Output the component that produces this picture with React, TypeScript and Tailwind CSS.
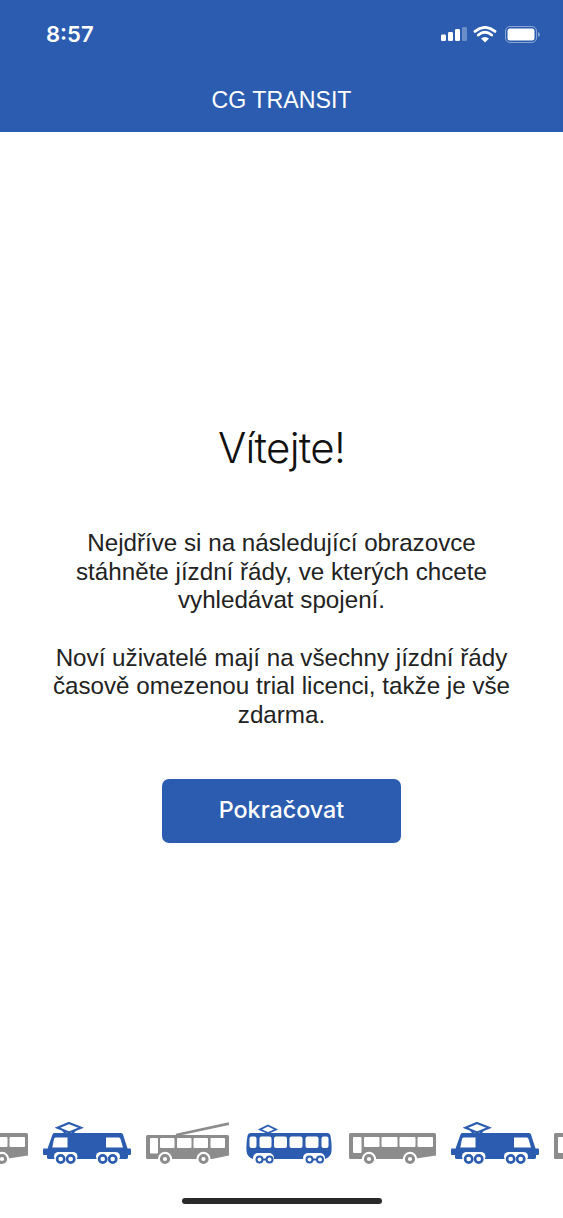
import React from 'react';

const BLUE = '#2b5cb0';
const GRAY = '#8c8c8c';

function Wheel({ x, color }: { x: number; color: string }) {
  return (
    <>
      <circle cx={x} cy={38} r={7.2} fill="#fff" />
      <circle cx={x} cy={38} r={3.6} fill="#fff" stroke={color} strokeWidth={3} />
    </>
  );
}

function Bus() {
  return (
    <svg width={87} height={44} viewBox="0 0 87 44" className="shrink-0">
      <path d="M1.5 12H85.5A1.5 1.5 0 0 1 87 13.5V34.5L64 38H1.5A1.5 1.5 0 0 1 0 36.5V13.5A1.5 1.5 0 0 1 1.5 12Z" fill={GRAY} />
      <rect x={4} y={16} width={8.5} height={16} rx={1} fill="#fff" />
      <rect x={15} y={16} width={15.5} height={10} rx={1} fill="#fff" />
      <rect x={32.5} y={16} width={16} height={10} rx={1} fill="#fff" />
      <rect x={50.5} y={16} width={16} height={10} rx={1} fill="#fff" />
      <rect x={68.5} y={16} width={15.5} height={10} rx={1} fill="#fff" />
      <Wheel x={20} color={GRAY} />
      <Wheel x={61} color={GRAY} />
    </svg>
  );
}

function Trolley() {
  return (
    <svg width={83} height={44} viewBox="0 0 83 44" className="shrink-0">
      <path d="M30 14L83 2.6" stroke={GRAY} strokeWidth={2.6} fill="none" />
      <path d="M1.5 14H81.5A1.5 1.5 0 0 1 83 15.5V34.5L66 38H1.5A1.5 1.5 0 0 1 0 36.5V15.5A1.5 1.5 0 0 1 1.5 14Z" fill={GRAY} />
      <rect x={4} y={17} width={8} height={15.5} rx={1} fill="#fff" />
      <rect x={14} y={17} width={14.5} height={10} rx={1} fill="#fff" />
      <rect x={31} y={17} width={14.5} height={10} rx={1} fill="#fff" />
      <rect x={47.5} y={17} width={14.5} height={10} rx={1} fill="#fff" />
      <rect x={64.5} y={17} width={14.5} height={10} rx={1} fill="#fff" />
      <Wheel x={19} color={GRAY} />
      <Wheel x={57.5} color={GRAY} />
    </svg>
  );
}

function Loco() {
  return (
    <svg width={88} height={44} viewBox="0 0 88 44" className="shrink-0">
      <path d="M26 2L38 6.7L26 11.4L14.5 6.7Z" fill="none" stroke={BLUE} strokeWidth={2.2} />
      <path d="M20 9.5L23 12.5M32 9.5L29 12.5" stroke={BLUE} strokeWidth={2} fill="none" />
      <path d="M11 12H78Q79.5 12 80 13.5L85 29V36.5Q85 38 83 38H6Q4 38 4 36.5V29L9.5 13.5Q10 12 11 12Z" fill={BLUE} />
      <rect x={0} y={27.5} width={5} height={6.5} rx={1} fill={BLUE} />
      <rect x={83} y={27.5} width={5} height={6.5} rx={1} fill={BLUE} />
      <path d="M12.5 16.5H24.5V26.5H9.3L11 18Q11.5 16.5 12.5 16.5Z" fill="#fff" />
      <path d="M63 16.5H76Q77 16.5 77.5 18L80 26.5H63Z" fill="#fff" />
      <rect x={11} y={31} width={23.5} height={9} rx={4.5} fill="#fff" />
      <rect x={53} y={31} width={24} height={9} rx={4.5} fill="#fff" />
      <circle cx={17.7} cy={38} r={3.6} fill="#fff" stroke={BLUE} strokeWidth={2.6} />
      <circle cx={27.7} cy={38} r={3.6} fill="#fff" stroke={BLUE} strokeWidth={2.6} />
      <circle cx={59.7} cy={38} r={3.6} fill="#fff" stroke={BLUE} strokeWidth={2.6} />
      <circle cx={69.7} cy={38} r={3.6} fill="#fff" stroke={BLUE} strokeWidth={2.6} />
    </svg>
  );
}

function Tram() {
  return (
    <svg width={86} height={44} viewBox="0 0 86 44" className="shrink-0">
      <path d="M22 4.5L30 8.5L22 12L14 8.5Z" fill="none" stroke={BLUE} strokeWidth={1.8} />
      <path d="M5 12H81Q84 12 84.5 15Q86 22 85.5 30Q85 36 79 38H7Q1 36 0.5 30Q0 22 1.5 15Q2 12 5 12Z" fill={BLUE} />
      <rect x={3.5} y={15.5} width={7} height={11.5} rx={2} fill="#fff" />
      <rect x={13.5} y={15.5} width={12} height={11.5} rx={2} fill="#fff" />
      <rect x={28} y={15.5} width={13} height={11.5} rx={2} fill="#fff" />
      <rect x={43.5} y={15.5} width={13} height={11.5} rx={2} fill="#fff" />
      <rect x={59.5} y={15.5} width={13} height={11.5} rx={2} fill="#fff" />
      <rect x={75.5} y={15.5} width={7} height={11.5} rx={2} fill="#fff" />
      <rect x={7} y={32} width={21} height={10} rx={5} fill="#fff" />
      <rect x={57} y={32} width={22} height={10} rx={5} fill="#fff" />
      <path d="M14 38.5H24M64 38.5H74" stroke={BLUE} strokeWidth={1.8} />
      <circle cx={13.5} cy={38.5} r={3} fill="#fff" stroke={BLUE} strokeWidth={2} />
      <circle cx={23.5} cy={38.5} r={3} fill="#fff" stroke={BLUE} strokeWidth={2} />
      <circle cx={63.5} cy={38.5} r={3} fill="#fff" stroke={BLUE} strokeWidth={2} />
      <circle cx={74} cy={38.5} r={3} fill="#fff" stroke={BLUE} strokeWidth={2} />
    </svg>
  );
}

function StatusIcons() {
  return (
    <div className="flex items-center">
      <svg width={26} height={16} viewBox="0 0 26 16" className="mr-[6px]">
        <rect x={0} y={8.5} width={5} height={6.5} rx={1.2} fill="#fff" />
        <rect x={7} y={6} width={5} height={9} rx={1.2} fill="#fff" />
        <rect x={14} y={3} width={5} height={12} rx={1.2} fill="#fff" />
        <rect x={21} y={1} width={5} height={14} rx={1.2} fill="#fff" opacity={0.3} />
      </svg>
      <svg width={24} height={17} viewBox="0 0 24 17" className="mr-[8px]">
        <path d="M12 16.5L8 12.6Q12 9.6 16 12.6Z" fill="#fff" />
        <path d="M5.3 9Q12 3.6 18.7 9" stroke="#fff" strokeWidth={2.8} fill="none" strokeLinecap="round" />
        <path d="M2 5.4Q12 -2.6 22 5.4" stroke="#fff" strokeWidth={2.8} fill="none" strokeLinecap="round" />
      </svg>
      <svg width={36} height={17} viewBox="0 0 36 17">
        <rect x={0.5} y={0.5} width={31} height={16} rx={4.5} fill="none" stroke="#fff" strokeOpacity={0.45} />
        <rect x={2.5} y={2.5} width={27} height={12} rx={2.5} fill="#fff" />
        <path d="M33 6V11Q35 10.4 35 8.5Q35 6.6 33 6Z" fill="#fff" fillOpacity={0.45} />
      </svg>
    </div>
  );
}

export default function App() {
  return (
    <div className="flex h-[1218px] w-[563px] flex-col overflow-hidden bg-white font-['Liberation_Sans',sans-serif]">
      <header className="h-[132px] shrink-0 bg-[#2b5cb0] text-white">
        <div className="flex h-[68px] items-center justify-between pl-[46px] pr-[22px]">
          <span className="font-['Inter',sans-serif] text-[22px] font-semibold">8:57</span>
          <StatusIcons />
        </div>
        <h1 className="mt-[2px] text-center text-[23.2px] leading-[60px]">CG TRANSIT</h1>
      </header>

      <main className="flex flex-1 flex-col items-center pt-[288px]">
        <h2 className="font-['Inter',sans-serif] text-[42px] font-light leading-[56px] tracking-[-0.7px] text-[#111]">Vítejte!</h2>
        <div className="mt-[53px] w-[470px] text-center text-[24.2px] leading-[28.6px] text-[#222]">
          <p>Nejdříve si na následující obrazovce stáhněte jízdní řády, ve kterých chcete vyhledávat spojení.</p>
          <p className="mt-[29px]">Noví uživatelé mají na všechny jízdní řády časově omezenou trial licenci, takže je vše zdarma.</p>
        </div>
        <button className="mt-[49px] h-[64px] w-[239px] rounded-[7px] bg-[#2b5cb0] font-['Inter',sans-serif] text-[23.3px] font-medium text-white">
          Pokračovat
        </button>
      </main>

      <div className="ml-[-59px] flex shrink-0 items-start gap-[15px]">
        <Bus />
        <Loco />
        <div className="mr-[2px]"><Trolley /></div>
        <div className="mr-[2px]"><Tram /></div>
        <Bus />
        <Loco />
        <Bus />
      </div>
      <div className="flex h-[53px] shrink-0 justify-center pt-[33px]">
        <div className="h-[6px] w-[200px] rounded-full bg-[#2a2a2a]" />
      </div>
    </div>
  );
}
